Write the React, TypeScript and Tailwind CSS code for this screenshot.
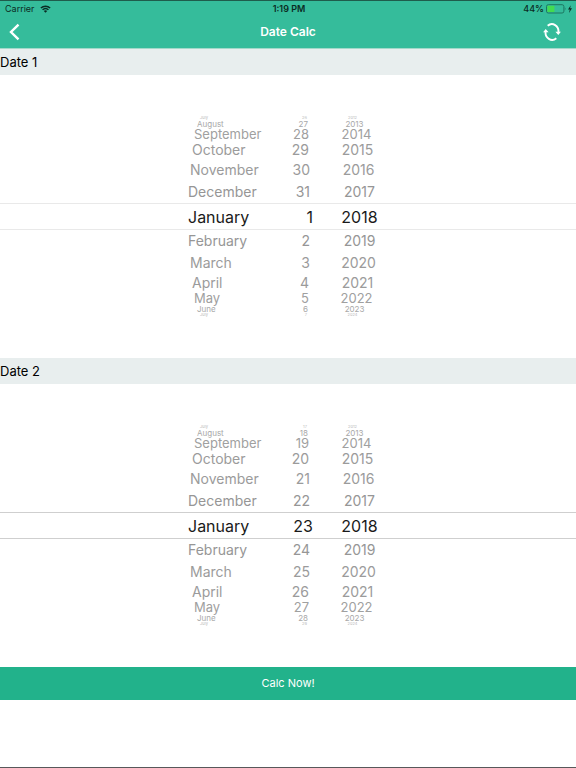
import { useState } from "react";

const MONTHS = ["July", "August", "September", "October", "November", "December", "January", "February", "March", "April", "May", "June", "July"];
const YEARS = ["2012", "2013", "2014", "2015", "2016", "2017", "2018", "2019", "2020", "2021", "2022", "2023", "2024"];
const DAYS_1 = ["26", "27", "28", "29", "30", "31", "1", "2", "3", "4", "5", "6", "7"];
const DAYS_2 = ["17", "18", "19", "20", "21", "22", "23", "24", "25", "26", "27", "28", "29"];

// Row styles by distance from the selected row in the middle of the wheel.
const ROW = [
  "h-[27px] text-[16px] text-[#1a1a1a]",
  "h-[22px] text-[14px] text-[#969696]",
  "h-[22px] text-[14px] text-[#9b9b9b]",
  "h-[18px] text-[14px] text-[#9b9b9b]",
  "h-[13px] text-[13px] text-[#a0a0a0]",
  "h-[8px] text-[8px] text-[#a8a8a8]",
  "h-[4px] text-[4px] text-[#b8b8b8]",
];
const MONTH_PAD = ["pl-0", "pl-0", "pl-[2px]", "pl-[4px]", "pl-[6px]", "pl-[9px]", "pl-[12px]"];
const DAY_PAD = ["pr-0", "pr-[3px]", "pr-[3px]", "pr-[4px]", "pr-[4px]", "pr-[5px]", "pr-[6px]"];
const YEAR_PAD = ["pr-0", "pr-0", "pr-[2px]", "pr-[4px]", "pr-[6px]", "pr-[10px]", "pr-[14px]"];

type WheelProps = { label: string; items: string[]; pads: string[]; className: string; align: string };

function Wheel({ label, items, pads, className, align }: WheelProps) {
  return (
    <ul role="listbox" aria-label={label} className={className}>
      {items.map((item, i) => {
        const d = Math.abs(i - 6);
        return (
          <li
            key={i}
            role="option"
            aria-selected={d === 0}
            className={`flex items-center whitespace-nowrap ${align} ${ROW[d]} ${pads[d]}`}
          >
            <span className="leading-none">{item}</span>
          </li>
        );
      })}
    </ul>
  );
}

function DateSection({ title, days, line }: { title: string; days: string[]; line: string }) {
  return (
    <section>
      <h2 className="h-[26px] bg-[#e8eeee] text-[13px] leading-[26px] text-black">{title}</h2>
      <div className="grid h-[283px] items-center">
        <div className={`col-start-1 row-start-1 h-[27px] border-y ${line}`} />
        <div className="col-start-1 row-start-1 mx-auto flex w-[200px]">
          <Wheel label={`${title} month`} items={MONTHS} pads={MONTH_PAD} className="w-[92px]" align="justify-start" />
          <Wheel label={`${title} day`} items={days} pads={DAY_PAD} className="w-[33px]" align="justify-end" />
          <Wheel label={`${title} year`} items={YEARS} pads={YEAR_PAD} className="ml-[18px] w-[57px]" align="justify-center" />
        </div>
      </div>
    </section>
  );
}

function Wifi() {
  return (
    <svg viewBox="0 0 12 9" className="h-[8px] w-[11px]" fill="none" stroke="#0b2b23" strokeWidth="1.7">
      <path d="M.8 3.3C3.7.6 8.3.6 11.2 3.3M2.7 5.4C4.6 3.7 7.4 3.7 9.3 5.4" />
      <path d="M4.1 6.7C5.2 5.8 6.8 5.8 7.9 6.7L6 8.8Z" fill="#0b2b23" stroke="none" />
    </svg>
  );
}

function Battery() {
  return (
    <svg viewBox="0 0 27 10" className="h-[10px] w-[27px]">
      <rect x=".5" y=".7" width="17.4" height="8.3" rx="1.8" fill="none" stroke="#1c7761" />
      <rect x="1.4" y="1.7" width="7" height="6.4" rx=".6" fill="#43db50" />
      <path d="M18.9 3.3q1.4 1.6 0 3.2Z" fill="#1c7761" />
      <path d="M24.8 1.2 22 5.5h1.8L23 8.9 26 4.3h-1.9Z" fill="#0b2b23" />
    </svg>
  );
}

export default function App() {
  const [turns, setTurns] = useState(0);
  return (
    <div className="flex min-h-screen flex-col border-b border-[#58585a] bg-white font-['Inter','Liberation_Sans',sans-serif]">
      <header className="h-[49px] border-t border-b border-t-[#1f5c4c] border-b-[#a3d9ca] bg-[#35bc9b]">
        <div className="grid h-[15px] grid-cols-3 items-center pr-[3px] pl-[5px] text-[9px] leading-[15px] text-[#0b2b23]">
          <div className="flex items-center gap-[5px]">
            <span>Carrier</span>
            <Wifi />
          </div>
          <span className="text-center font-semibold">1:19 PM</span>
          <div className="flex items-center justify-end gap-[2px]">
            <span className="font-medium">44%</span>
            <Battery />
          </div>
        </div>
        <div className="grid h-8 grid-cols-3 items-center px-2">
          <button type="button" aria-label="Back" className="justify-self-start">
            <svg viewBox="0 0 14 18" className="h-[18px] w-[14px]" fill="none" stroke="white" strokeWidth="2.4">
              <path d="M10.5 1.6 3 9l7.5 7.4" />
            </svg>
          </button>
          <h1 className="text-center text-[12px] font-semibold text-white">Date Calc</h1>
          <button type="button" aria-label="Refresh" className="mr-[7px] justify-self-end" onClick={() => setTurns(turns + 1)}>
            <svg viewBox="0 0 18 18" className="h-[18px] w-[18px]" fill="none" stroke="white" strokeWidth="1.9">
              <path d="M4.7 2.8A6.6 7.4 0 0 1 15.4 9.6M13.3 15.2A6.6 7.4 0 0 1 2.6 8.4" />
              <path d="M12.4 8.8h5.5L15.3 12ZM.1 9.2h5.5L2.7 6Z" fill="white" stroke="none" />
            </svg>
          </button>
        </div>
      </header>
      <main>
        <DateSection title="Date 1" days={DAYS_1} line="border-[#e9e9e9]" />
        <DateSection title="Date 2" days={DAYS_2} line="border-[#cfcfcf]" />
        <button type="button" className="block h-[33px] w-full bg-[#22b28b] text-[11px] text-white">
          Calc Now!
        </button>
      </main>
    </div>
  );
}
